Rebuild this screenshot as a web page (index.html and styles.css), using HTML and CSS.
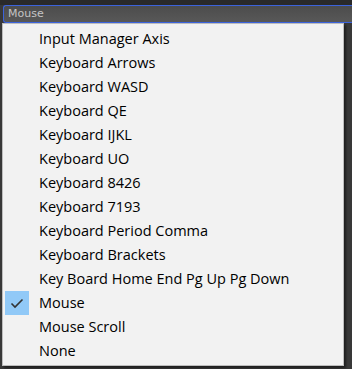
FILE: index.html
```html
<!DOCTYPE html>
<html>
<head>
<meta charset="utf-8">
<link rel="stylesheet" href="styles.css">
</head>
<body>
<div class="topstrip"></div>
<div class="field"><span class="field-text">Mouse</span></div>
<div class="menu">
  <div class="item"><span class="label">Input Manager Axis</span></div>
  <div class="item"><span class="label">Keyboard Arrows</span></div>
  <div class="item"><span class="label">Keyboard WASD</span></div>
  <div class="item"><span class="label">Keyboard QE</span></div>
  <div class="item"><span class="label">Keyboard IJKL</span></div>
  <div class="item"><span class="label">Keyboard UO</span></div>
  <div class="item"><span class="label">Keyboard 8426</span></div>
  <div class="item"><span class="label">Keyboard 7193</span></div>
  <div class="item"><span class="label">Keyboard Period Comma</span></div>
  <div class="item"><span class="label">Keyboard Brackets</span></div>
  <div class="item"><span class="label">Key Board Home End Pg Up Pg Down</span></div>
  <div class="item checked"><span class="check"><svg width="24" height="24" viewBox="0 0 24 24"><polyline points="6.5,12.5 10,16 17.5,8.5" fill="none" stroke="#333" stroke-width="1.6"/></svg></span><span class="label">Mouse</span></div>
  <div class="item"><span class="label">Mouse Scroll</span></div>
  <div class="item"><span class="label">None</span></div>
</div>
</body>
</html>
```
FILE: styles.css
```css
html, body {
  margin: 0;
  padding: 0;
}
body {
  width: 352px;
  height: 369px;
  background: #383838;
  overflow: hidden;
  font-family: "Open Sans", "Noto Sans", sans-serif;
}
.topstrip {
  height: 5px;
  background: #2a2a2a;
}
.field {
  height: 16px;
  margin-left: 3px;
  border: 1px solid #3b63dc;
  border-right: none;
  border-radius: 3px 0 0 3px;
  background: linear-gradient(#4c4c4c, #585858);
  display: flex;
  align-items: center;
  padding-left: 4px;
}
.field-text {
  font-family: "DejaVu Sans", sans-serif;
  font-size: 11px;
  color: #c4c4c4;
  line-height: 16px;
}
.menu {
  margin-left: 2px;
  width: 340px;
  height: 336px;
  padding-top: 3px;
  padding-bottom: 2px;
  background: #f2f2f2;
  border: 1px solid #bdbdbd;
  box-shadow: 2px 2px 2px rgba(0, 0, 0, 0.45);
}
.item {
  height: 24px;
  display: flex;
  align-items: center;
  position: relative;
}
.label {
  margin-left: 36px;
  font-size: 14.5px;
  color: #000;
  line-height: 24px;
}
.check {
  position: absolute;
  left: 2px;
  top: 0;
  width: 24px;
  height: 24px;
  background: #91c9f7;
}
.check svg {
  display: block;
}
```
